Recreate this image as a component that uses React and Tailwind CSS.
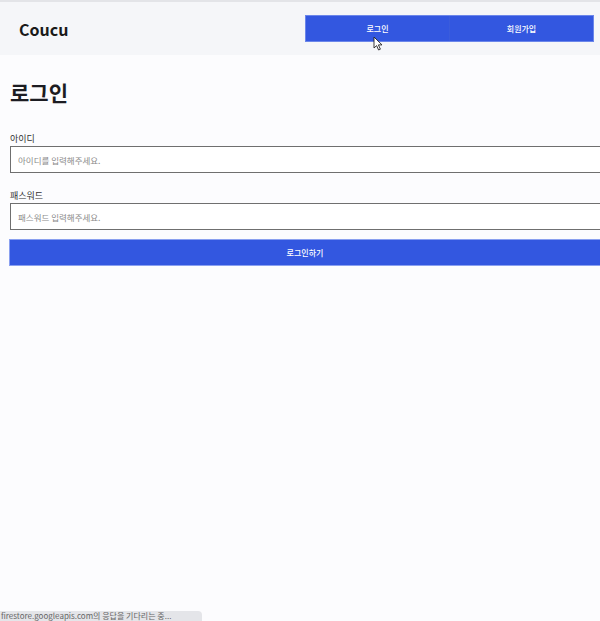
import React from 'react'

function Cursor() {
  return (
    <svg className="absolute left-[373px] top-[36px]" width="11" height="15" viewBox="0 0 11 15">
      <path d="M1 1 L1 12 L3.6 9.6 L5.6 14 L7.4 13.2 L5.4 8.9 L9 8.9 Z" fill="#fff" stroke="#222" strokeWidth="0.9" strokeLinejoin="round" />
    </svg>
  )
}

function Field({ label, placeholder, type }) {
  return (
    <div className="flex flex-col">
      <label className="text-[9px] leading-[12px] text-[#333]">{label}</label>
      <input
        type={type}
        placeholder={placeholder}
        className="mt-[1px] h-[27px] w-[600px] border border-[#6f6f6f] bg-white px-[7px] text-[8.5px] text-[#222] placeholder:text-[#8a8a8a] outline-none"
      />
    </div>
  )
}

export default function App() {
  return (
    <div className="relative h-[621px] w-[600px] overflow-hidden bg-[#fcfcfe] font-['Noto_Sans_CJK_KR','Noto_Sans',sans-serif]">
      <div className="h-[2px] bg-[#e3e4e8]" />
      <header className="flex h-[53px] items-center justify-between bg-[#f5f6f9] pl-[19px] pr-[7px]">
        <span className="text-[16px] font-bold text-[#1a1a1a]">Coucu</span>
        <nav className="flex h-[25px] w-[287px] bg-[#3357e0] shadow-[0_0_0_1px_#6b86ea]">
          <button className="flex-1 border-r border-[#3a5cdc] text-[8px] font-medium text-white">로그인</button>
          <button className="flex-1 text-[8px] font-medium text-white">회원가입</button>
        </nav>
      </header>
      <Cursor />

      <main className="px-[10px]">
        <h1 className="mt-[22px] text-[21px] font-bold leading-[30px] text-[#1c1c22]">로그인</h1>
        <div className="mt-[26px] flex flex-col gap-[17px]">
          <Field label="아이디" placeholder="아이디를 입력해주세요." type="text" />
          <Field label="패스워드" placeholder="패스워드 입력해주세요." type="password" />
        </div>
        <button className="mt-[10px] h-[25px] w-[590px] bg-[#3357e0] text-[8px] font-medium text-white shadow-[0_0_0_1px_#8aa0f0]">
          로그인하기
        </button>
      </main>

      <div className="absolute bottom-0 left-0 flex h-[10px] w-[202px] items-center rounded-tr-[4px] bg-[#e4e5e9] pl-[1px] text-[8px] leading-none text-[#666]">
        firestore.googleapis.com의 응답을 기다리는 중...
      </div>
    </div>
  )
}
